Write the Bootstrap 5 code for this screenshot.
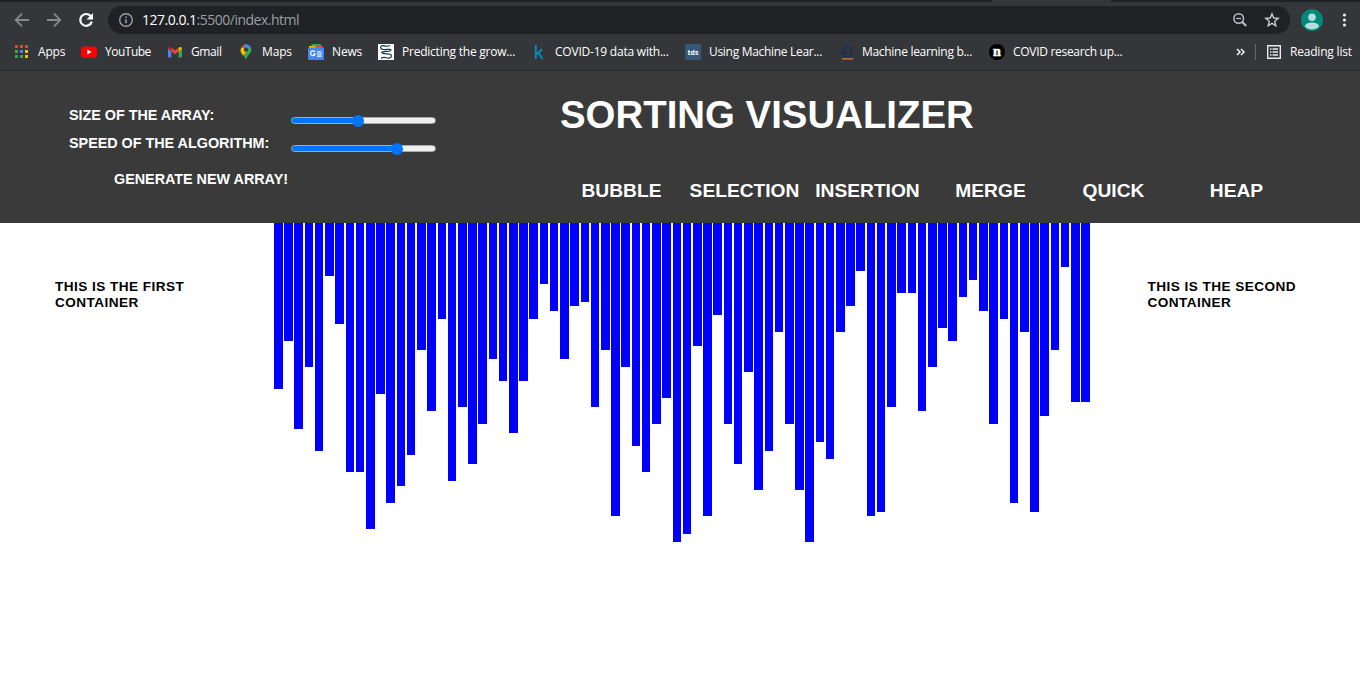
<!DOCTYPE html>
<html lang="en">
<head>
<meta charset="utf-8">
<title>Sorting Visualizer</title>
<link href="https://cdn.jsdelivr.net/npm/bootstrap@5.3.0/dist/css/bootstrap.min.css" rel="stylesheet">
<style>
body{background:#fff;font-family:"Liberation Sans",Arial,sans-serif;overflow:hidden;height:696px}
.browser{background:#35363a;height:71px;border-bottom:1px solid #29292b;font-family:"Open Sans","Noto Sans",sans-serif;color:#fff}
.tabstrip{height:2px;background:#202124}
.tabstrip i{margin-left:992px;width:119px;height:2px;background:#35363a}
.toolbar{height:36px;padding-left:12px}
.toolbar svg,.marks svg{flex:none;display:block;overflow:visible}
.fwd{margin:0 12px}
.omnibox{width:1182px;height:28px;border-radius:14px;background:#202124;margin-left:12px;padding:0 10px;font-size:14px}
.star{margin-left:16px}
.avatar{margin-left:11px}
.dots{margin-left:18px}
.url{color:#9aa0a6;margin:-2px 0 0 8px;white-space:nowrap;letter-spacing:-.5px}
.url b{color:#fff;font-weight:400}
.marks{height:28px;padding-left:14px;font-size:12px;white-space:nowrap}
.mk{gap:8px;flex:none;width:153px;letter-spacing:-.3px}
.mk.w67{width:67px;letter-spacing:-.2px}
.mk.w86{width:86px;letter-spacing:-.5px}
.mk.w71{width:71px;letter-spacing:-.4px}
.mk.w70{width:70px;letter-spacing:-.15px}
.mk.w154{width:154px;letter-spacing:-.22px}
.mk.w151{width:151px}
.mk.grow-mk{letter-spacing:-.23px}
.sep{width:1px;height:16px;background:#66676a;margin:0 11px 0 9px}
.rl{width:62px;margin:0 8px 0 9px;letter-spacing:-.2px}
.top-panel{background:#3a3a3a;height:152px;color:#fff;font-weight:700}
.controls{width:540px;padding:34px 0 0 69px;font-size:14.4px;letter-spacing:-.03px}
.ctl{height:28px}
.ctl label{width:222px;line-height:20px;white-space:nowrap}
.ctl .form-range{width:145px;height:13px;margin-top:9px}
.form-range::-webkit-slider-runnable-track{height:7px;border:1px solid #a9a9a9;border-radius:4px;background:linear-gradient(90deg,#0075ff var(--v),#efefef var(--v))}
.form-range::-webkit-slider-thumb{width:12px;height:12px;margin-top:-3.5px;background:#0075ff;box-shadow:none}
.gen{margin:8px 0 0 45px;line-height:20px}
.title-text{font-size:38.4px;line-height:46px;margin:21px 0 0 20px;font-weight:700;white-space:nowrap}
.algos{margin-top:42px;font-size:19.2px;line-height:22px}
.algos span{flex:none;text-align:center;width:123px}
.side{width:274.015625px;padding:56px 0 0 55px;font-size:13.6px;line-height:16px;font-weight:700;letter-spacing:.45px;color:#000;flex:none}
.side.right{width:auto;padding-left:56px}
.bars{width:817.5px;flex:none}
.bar{flex:none;width:8.546875px;margin-right:1.671875px;background:#00f}
</style>
</head>
<body>
<header class="browser">
  <div class="tabstrip d-flex"><i></i></div>
  <nav class="toolbar d-flex align-items-center">
    <svg width="20" height="20" viewBox="0 0 20 20" fill="none" stroke="#87888b" stroke-width="1.8"><path d="M17 10H4M10 3.7L3.7 10l6.3 6.3"/></svg>
    <svg class="fwd" width="20" height="20" viewBox="0 0 20 20" fill="none" stroke="#87888b" stroke-width="1.8"><path d="M3 10h13M10 3.7l6.3 6.3-6.3 6.3"/></svg>
    <svg width="20" height="20" viewBox="0 0 20 20"><path d="M15.800 11.600A5.900 5.900 0 1 1 14.600 6" fill="none" stroke="#fff" stroke-width="2.200"/><path d="M17 3v6.400h-6.400z" fill="#fff"/></svg>
    <div class="omnibox d-flex align-items-center">
      <svg width="16" height="16" viewBox="0 0 16 16"><circle cx="8" cy="8" r="6.300" fill="none" stroke="#9aa0a6" stroke-width="1.400"/><path d="M8 7.200v4M8 4.500v1.600" stroke="#9aa0a6" stroke-width="1.600"/></svg>
      <span class="url"><b>127.0.0.1</b>:5500/index.html</span>
      <svg class="ms-auto" width="16" height="16" viewBox="0 0 16 16" fill="none" stroke="#bdc1c6"><circle cx="6.700" cy="6.500" r="4.800" stroke-width="1.500"/><path d="M10.200 10l4 4" stroke-width="2"/><path d="M4.300 6.500h4.800" stroke-width="1.200"/></svg>
      <svg class="star" width="16" height="16" viewBox="0 0 16 16"><path d="M8 1.900l1.750 4.100 4.450.4-3.400 2.900 1 4.350L8 11.300l-3.800 2.350 1-4.350L1.800 6.400 6.250 6z" fill="none" stroke="#c7cacd" stroke-width="1.400"/></svg>
    </div>
    <svg class="avatar" width="22" height="22" viewBox="0 0 22 22"><circle cx="11" cy="11" r="11" fill="#00897b"/><circle cx="11" cy="8.300" r="3.800" fill="#b2dfdb"/><path d="M3.800 17.500c1-3 4-3.900 7.200-3.900s6.200.9 7.200 3.900a10 10 0 0 1-14.400 0z" fill="#b2dfdb"/></svg>
    <svg class="dots" width="8" height="16" viewBox="0 0 8 16" fill="#f1f1f1"><circle cx="3.500" cy="3" r="1.600"/><circle cx="3.500" cy="8" r="1.600"/><circle cx="3.500" cy="13" r="1.600"/></svg>
  </nav>
  <div class="marks d-flex align-items-center">
    <div class="mk w67 d-flex align-items-center"><svg width="16" height="16" viewBox="0 0 16 16"><path fill="#ea4335" d="M1 1h3v3H1zM6 1h3v3H6zM11 1h3v3h-3z"/><path fill="#34a853" d="M1 6h3v3H1zM1 11h3v3H1zM6 11h3v3H6z"/><path fill="#4285f4" d="M6 6h3v3H6z"/><path fill="#fbbc05" d="M11 6h3v3h-3zM11 11h3v3h-3z"/></svg><span>Apps</span></div>
    <div class="mk w86 d-flex align-items-center"><svg width="16" height="16" viewBox="0 0 16 16"><rect y="2.400" width="16" height="11.400" rx="3" fill="#f00"/><path d="M6.300 5.600v5l4.300-2.500z" fill="#fff"/></svg><span>YouTube</span></div>
    <div class="mk w71 d-flex align-items-center"><svg width="16" height="16" viewBox="0 0 16 16"><path d="M1 4.500l3.300 2.500v6.500H2a1 1 0 0 1-1-1z" fill="#4285f4"/><path d="M15 4.500L11.700 7v6.500H14a1 1 0 0 0 1-1z" fill="#34a853"/><path d="M4.300 3.700L8 6.500l3.700-2.800V7.500L8 10.300 4.300 7.500z" fill="#ea4335"/><path d="M11.700 3.700c1.400-1.300 3.300-.8 3.300 1L11.700 7.500z" fill="#fbbc05"/><path d="M4.300 3.700C2.900 2.400 1 2.900 1 4.700l3.300 2.800z" fill="#c5221f"/></svg><span>Gmail</span></div>
    <div class="mk w70 d-flex align-items-center"><svg width="16" height="16" viewBox="0 0 16 16"><path d="M8 .3a5.500 5.500 0 0 1 5.400 5.500C13.400 9.800 9.500 10.500 8 15.700 6.500 11.500 2.600 9.800 2.600 5.800z" fill="#34a853"/><path d="M8 5.800L3.500 9.400c-1.200-1.800-1.200-4.500.3-6.500z" fill="#fbbc05"/><path d="M8 5.800L3.600 2.800A5.600 5.600 0 0 1 6 .7z" fill="#ea4335"/><path d="M5.700.8a5.400 5.400 0 0 1 7.200 2.700L8 5.800z" fill="#4285f4"/><path d="M3.500 9.300l3.800-4 1.700 1.900-3.900 4.300z" fill="#fbbc05"/><circle cx="8" cy="5.700" r="2" fill="#35363a"/></svg><span>Maps</span></div>
    <div class="mk w70 d-flex align-items-center"><svg width="16" height="16" viewBox="0 0 16 16"><path d="M3.500 0H13v4H3.500z" fill="#34a853"/><path d="M1 2h6l1 2H1z" fill="#fbbc05"/><path d="M9 1.500l6 .8V5H8z" fill="#ea4335"/><rect y="3.500" width="16" height="12.500" rx="1" fill="#4285f4"/><path d="M7 8a2.400 2.400 0 1 0 .2 2H5M9 7.800h4.500M9 10h5M9 12.200h4.500" fill="none" stroke="#fff" stroke-width="1.200"/></svg><span>News</span></div>
    <div class="mk grow-mk d-flex align-items-center"><svg width="16" height="16" viewBox="0 0 16 16"><path fill="#fff" d="M0 0h16v16H0z"/><path d="M2.800 4.300C2 2.300 4 1.300 6 1.800s4 1 6-.3M2.800 4.300c1 2.500 8 .5 10.200 1.200M12.800 5.500C14 8.500 5 6.500 3.300 8.700M4 9c2.500 2 8.500-.5 9.500 2.500M13.500 11.500c.3 2.500-3 3-5 2.300s-4-.5-5.500.7" fill="none" stroke="#183650" stroke-width="1.200"/></svg><span>Predicting the grow...</span></div>
    <div class="mk w154 d-flex align-items-center"><svg width="16" height="16" viewBox="0 0 16 16"><path d="M4.800 1v14M11.200 5.200L5.500 10.300M7.300 8.600L11.500 15" fill="none" stroke="#0a8ab8" stroke-width="2"/></svg><span>COVID-19 data with...</span></div>
    <div class="mk d-flex align-items-center"><svg width="16" height="16" viewBox="0 0 16 16"><path fill="#355876" d="M0 0h16v16H0z"/><text x="8" y="10.500" text-anchor="middle" font-size="7" font-weight="700" fill="#fff" font-family="Open Sans" letter-spacing="0">tds</text></svg><span>Using Machine Lear...</span></div>
    <div class="mk w151 d-flex align-items-center"><svg width="16" height="16" viewBox="0 0 16 16"><path d="M5.300 12.500h8.200c.5-3 .8-5.500-.3-7.500-1-2-3-3.300-5.200-3.200L6.200 4.200 3 7.800l1.300 1.400 3.200-1.400 1.800-.3-4 5" fill="none" stroke="#14305a" stroke-width="1.200"/><path d="M4 14.900h11" stroke="#e58325" stroke-width="1.200"/></svg><span>Machine learning b...</span></div>
    <div class="mk d-flex align-items-center"><svg width="16" height="16" viewBox="0 0 16 16"><circle cx="8" cy="8" r="8" fill="#000"/><text x="8" y="12" text-anchor="middle" font-size="14" font-weight="700" fill="#fff" font-family="Liberation Serif" letter-spacing="0" stroke="#fff" stroke-width=".5">n</text></svg><span>COVID research up...</span></div>
    <svg class="ms-auto" width="10" height="8" viewBox="0 0 10 8"><path d="M1 1l3 3-3 3M5 1l3 3-3 3" fill="none" stroke="#f1f1f1" stroke-width="1.500"/></svg>
    <i class="sep"></i>
    <svg width="14" height="14" viewBox="0 0 14 14" fill="none" stroke="#e8eaed"><path d="M.7.700h12.600v12.600H.7z" stroke-width="1.400"/><path d="M3 4h1.500M3 7h1.500M3 10h1.500M5.500 4H11M5.500 7H11M5.500 10H11" stroke-width="1.500"/></svg>
    <span class="rl">Reading list</span>
  </div>
</header>
<main>
  <section class="top-panel d-flex">
    <div class="controls flex-shrink-0">
      <div class="ctl d-flex"><label for="sz">SIZE OF THE ARRAY:</label><input id="sz" class="form-range" type="range" min="0" max="100" value="46" style="--v:46%"></div>
      <div class="ctl d-flex"><label for="sp">SPEED OF THE ALGORITHM:</label><input id="sp" class="form-range" type="range" min="0" max="100" step="0.5" value="75.5" style="--v:75.5%"></div>
      <div class="gen">GENERATE NEW ARRAY!</div>
    </div>
    <div>
      <h1 class="title-text">SORTING VISUALIZER</h1>
      <div class="algos d-flex ms-3 ps-1">
        <span>BUBBLE</span><span>SELECTION</span><span>INSERTION</span><span>MERGE</span><span>QUICK</span><span>HEAP</span>
      </div>
    </div>
  </section>
  <section class="d-flex">
    <div class="side">THIS IS THE FIRST<br>CONTAINER</div>
    <div class="bars d-flex align-items-start" id="bars"></div>
    <div class="side right">THIS IS THE SECOND<br>CONTAINER</div>
  </section>
</main>
<script src="https://cdn.jsdelivr.net/npm/bootstrap@5.3.0/dist/js/bootstrap.bundle.min.js"></script>
<script>
const values=[166,118,206,144,228,53,101,249,249,306,171,280,263,232,127,188,96,258,184,241,
201,136,158,210,158,96,61,88,136,83,79,184,127,293,144,223,249,201,175,319,311,
123,293,92,201,241,149,267,228,109,201,267,319,219,236,109,83,48,293,289,184,
70,70,188,144,105,118,74,57,88,201,96,280,109,289,193,127,44,179,179];
document.getElementById('bars').innerHTML=values.map(h=>`<div class="bar" style="height:${h}px"></div>`).join('');
</script>
</body>
</html>
